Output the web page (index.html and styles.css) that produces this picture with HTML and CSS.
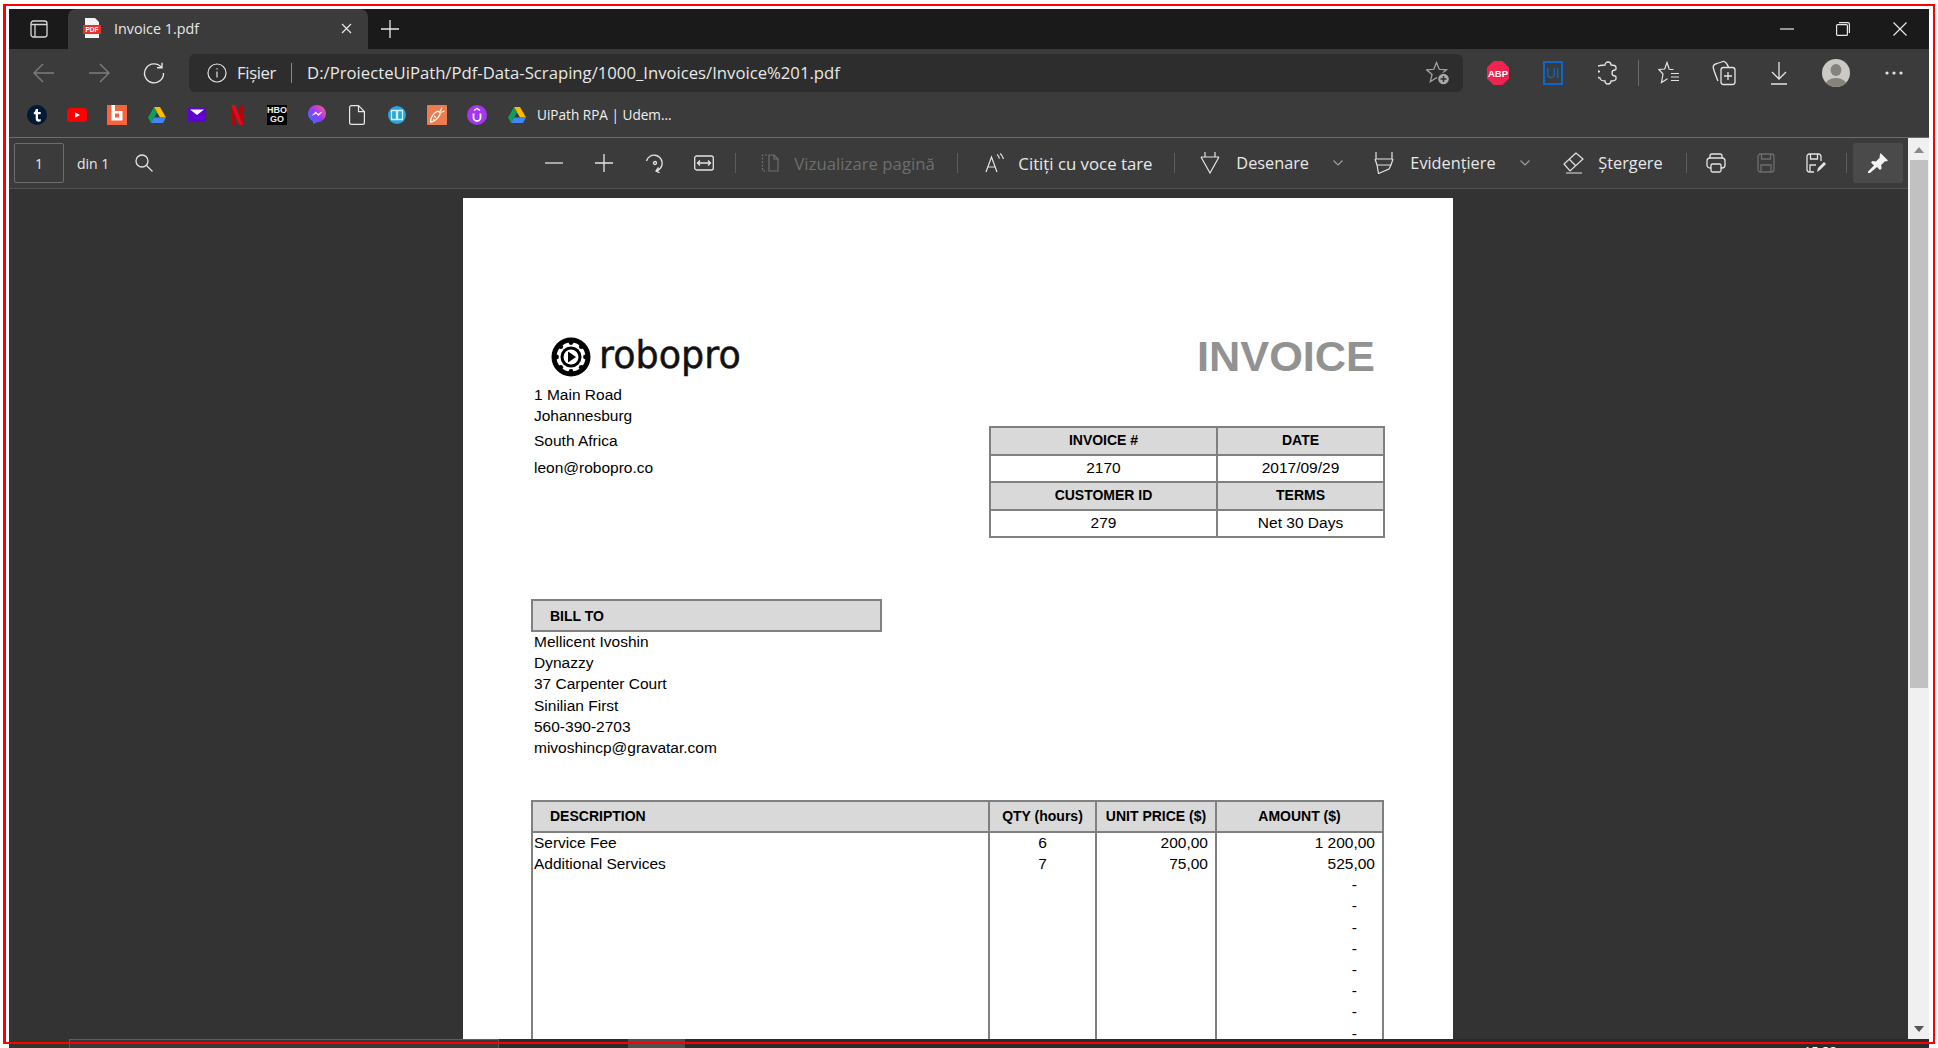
FILE: index.html
```html
<!DOCTYPE html>
<html lang="ro">
<head>
<meta charset="utf-8">
<title>Invoice 1.pdf</title>
<link rel="stylesheet" href="styles.css">
</head>
<body>
<div class="window">
  <header class="tabbar">
    <button class="side-btn">
      <svg width="18" height="18" viewBox="0 0 18 18" fill="none" stroke="#d8d8d8" stroke-width="1.3"><rect x="1" y="1" width="16" height="16" rx="2.5"/><path d="M1 4.5h16M5 4.5V17"/></svg>
    </button>
    <div class="tab">
      <svg width="18" height="20" viewBox="0 0 18 20"><path d="M2 0h10l4 4v16H2z" fill="#f4f4f4"/><rect y="7" width="18" height="9" fill="#e5322d"/><text x="9" y="14.2" class="pdf-mark">PDF</text></svg>
      <span class="tab-title">Invoice 1.pdf</span>
      <svg class="tab-close" width="11" height="11" viewBox="0 0 11 11" stroke="#e8e8e8" stroke-width="1.2"><path d="M1 1l9 9M10 1l-9 9"/></svg>
    </div>
    <svg class="new-tab" width="18" height="18" viewBox="0 0 18 18" stroke="#e8e8e8" stroke-width="1.3"><path d="M9 0v18M0 9h18"/></svg>
    <div class="win-controls">
      <svg width="14" height="14" viewBox="0 0 14 14" stroke="#e8e8e8" stroke-width="1.2"><path d="M0 7h14"/></svg>
      <svg width="14" height="14" viewBox="0 0 14 14" fill="none" stroke="#e8e8e8" stroke-width="1.2"><rect x=".6" y="2.6" width="10.8" height="10.8" rx="1"/><path d="M3 .6h9a1.4 1.4 0 0 1 1.4 1.4v9"/></svg>
      <svg class="win-close" width="14" height="14" viewBox="0 0 14 14" stroke="#e8e8e8" stroke-width="1.2"><path d="M.5.5l13 13M13.5.5l-13 13"/></svg>
    </div>
  </header>

  <nav class="navbar">
    <div class="nav-left">
      <svg width="22" height="20" viewBox="0 0 22 20" fill="none" stroke="#7d7d7d" stroke-width="1.4"><path d="M21 10H1M10 1l-9 9 9 9"/></svg>
      <svg width="22" height="20" viewBox="0 0 22 20" fill="none" stroke="#7d7d7d" stroke-width="1.4"><path d="M1 10h20M12 1l9 9-9 9"/></svg>
      <svg width="22" height="22" viewBox="0 0 22 22" fill="none" stroke="#e4e4e4" stroke-width="1.4"><path d="M18.5 5.5A9.5 9.5 0 1 0 20.5 11"/><path d="M19 .8v5h-5"/></svg>
    </div>
    <div class="address">
      <svg width="20" height="20" viewBox="0 0 20 20" fill="none" stroke="#e4e4e4" stroke-width="1.2"><circle cx="10" cy="10" r="9"/><path d="M10 8.5v6M10 5.2v1.4"/></svg>
      <span class="addr-scheme">Fișier</span>
      <span class="addr-sep"></span>
      <span class="addr-url">D:/ProiecteUiPath/Pdf-Data-Scraping/1000_Invoices/Invoice%201.pdf</span>
      <svg class="addr-star" width="24" height="24" viewBox="0 0 24 24"><path d="M10.500 1.500l2.700 6.800 7.300.5-5.600 4.700 1.800 7.200-6.200-3.900-6.200 3.900 1.800-7.200L.500 8.800l7.300-.5z" fill="none" stroke="#a8a8a8" stroke-width="1.200"/><circle cx="17.500" cy="18" r="6.500" fill="#2d2d2d"/><circle cx="17.500" cy="18" r="5.300" fill="#a8a8a8"/><path d="M17.500 15v6M14.500 18h6" stroke="#2d2d2d" stroke-width="1.400"/></svg>
    </div>
    <div class="nav-right">
      <div class="ext-slot">
        <svg width="22" height="24" viewBox="0 0 22 24"><path d="M6.500 0h9L22 6.500v11L15.500 24h-9L0 17.500v-11z" fill="#ee2350"/><text x="11" y="16" class="abp-mark">ABP</text></svg>
      </div>
      <div class="ext-slot">
        <svg width="20" height="24" viewBox="0 0 20 24"><rect x="1" y="1" width="18" height="22" fill="none" stroke="#0a67d0" stroke-width="2"/><text x="10" y="17" class="ui-mark">Ui</text></svg>
      </div>
      <div class="ext-slot">
        <svg width="20" height="24" viewBox="0 0 20 24" fill="none" stroke="#e4e4e4" stroke-width="1.300"><path d="M7 4a3 3 0 0 1 6 0c2 0 5 .5 5 2.500V8a1 1 0 0 1-1 1 3 3 0 0 0 0 6 1 1 0 0 1 1 1v1.500c0 2-3 2.500-5 2.500a3 3 0 0 1-6 0c-2.500 0-5-1-5-3a3 3 0 0 1 0-6.500 3 3 0 0 1 0-6C2 4.500 5 4 7 4z"/></svg>
      </div>
      <span class="nav-sep"></span>
      <div class="ext-slot">
        <svg width="22" height="24" viewBox="0 0 22 24" fill="none" stroke="#e4e4e4" stroke-width="1.200"><path d="M11.300 8.500L9 1.500 6.700 8 .8 8.500 5 13l-1.500 8.500 6-3.700"/><path d="M11.500 8.500h4M13 12.500h8M13 16h8M13 19.500h8"/></svg>
      </div>
      <div class="ext-slot">
        <svg width="24" height="26" viewBox="0 0 24 26" fill="none" stroke="#e4e4e4" stroke-width="1.300"><rect x="9" y="7.500" width="14" height="17" rx="2.500"/><path d="M16 12v8M12 16h8"/><path d="M6 21C3.500 15 2 11 1.200 7.500 1 5 3 4 5 3.500l6-2c2-.5 4.500 2.500 5.500 6"/></svg>
      </div>
      <div class="ext-slot">
        <svg width="18" height="24" viewBox="0 0 18 24" fill="none" stroke="#e4e4e4" stroke-width="1.300"><path d="M9 1v17M2 11l7 7 7-7M1 23h16"/></svg>
      </div>
      <div class="ext-slot slot-wide">
        <svg width="28" height="28" viewBox="0 0 28 28"><defs><clipPath id="av"><circle cx="14" cy="14" r="14"/></clipPath></defs><circle cx="14" cy="14" r="14" fill="#cbc9c4"/><g clip-path="url(#av)" fill="#86837d"><ellipse cx="14" cy="11" rx="5.500" ry="6"/><ellipse cx="14" cy="27" rx="11" ry="8"/></g></svg>
      </div>
      <div class="ext-slot">
        <svg width="18" height="4" viewBox="0 0 18 4" fill="#e4e4e4"><circle cx="2" cy="2" r="1.600"/><circle cx="9" cy="2" r="1.600"/><circle cx="16" cy="2" r="1.600"/></svg>
      </div>
    </div>
  </nav>

  <div class="bookmarks">
    <span class="bm"><svg width="20" height="20" viewBox="0 0 20 20"><circle cx="10" cy="10" r="10" fill="#001935"/><path d="M8.700 4h2.300v3h2.700v2.300H11v4c0 1.300 1.500 1.300 2.700.7v2.300c-2.500 1-5 .4-5-2.500V9.300H6.800V7.500C8 7 8.500 6 8.700 4z" fill="#fff"/></svg></span>
    <span class="bm"><svg width="20" height="14" viewBox="0 0 20 14"><rect width="20" height="14" rx="3.500" fill="#f00"/><path d="M8 4.200L13 7l-5 2.800z" fill="#fff"/></svg></span>
    <span class="bm"><svg width="20" height="20" viewBox="0 0 20 20"><rect width="20" height="20" fill="#f8623e"/><path d="M4.500 0h3.500v6h7.500v9.500h-11z" fill="#fff"/><rect x="8" y="8.500" width="4" height="4" fill="#f8623e"/></svg></span>
    <span class="bm"><svg width="18" height="16" viewBox="0 0 18 16"><path d="M6 0h6l6 10.500h-6z" fill="#fbbc04"/><path d="M6 0L0 10.500l3 5.500 6-10.500z" fill="#0f9d58"/><path d="M3 16h12l3-5.500H6z" fill="#4285f4"/></svg></span>
    <span class="bm"><svg width="18" height="14" viewBox="0 0 18 14"><rect width="18" height="14" rx="1" fill="#5f01d1"/><path d="M2 1.500h14L9 7z" fill="#fff"/></svg></span>
    <span class="bm"><svg width="12" height="20" viewBox="0 0 12 20"><path d="M0 0h4v20l-4-.5z" fill="#b1060f"/><path d="M8 0h4v20l-4-.5z" fill="#b1060f"/><path d="M0 0h4l8 20-4-.5z" fill="#e50914"/></svg></span>
    <span class="bm"><span class="hbo"><b>HBO</b><b>GO</b></span></span>
    <span class="bm"><svg width="18" height="19" viewBox="0 0 18 19"><defs><linearGradient id="ms" x1="0" y1="1" x2="1" y2="0"><stop offset="0" stop-color="#0a8cff"/><stop offset=".5" stop-color="#a033ff"/><stop offset="1" stop-color="#ff6a6a"/></linearGradient></defs><path d="M9 0a9 8.600 0 0 1 0 17.200L5 19v-2.700A9 8.600 0 0 1 9 0z" fill="url(#ms)"/><path d="M3.500 11L7.500 6.500l2.500 2.300 4.500-2.300-4 4.500-2.500-2.300z" fill="#fff"/></svg></span>
    <span class="bm"><svg width="16" height="20" viewBox="0 0 16 20" fill="none" stroke="#e8e8e8" stroke-width="1.200"><path d="M2.500.6h7L15.400 6.500V17.500a1.900 1.900 0 0 1-1.900 1.900h-11A1.900 1.900 0 0 1 .6 17.500v-15A1.900 1.900 0 0 1 2.500.6zM9.500.6v6h5.900"/></svg></span>
    <span class="bm"><svg width="18" height="18" viewBox="0 0 18 18"><circle cx="9" cy="9" r="9" fill="#27a5dc"/><path d="M3.500 4.500h5v9h-5zM9.500 4.500h5v9h-5z" fill="#27a5dc" stroke="#d5f0fb" stroke-width="1.300"/></svg></span>
    <span class="bm"><svg width="20" height="20" viewBox="0 0 20 20"><rect width="20" height="20" rx="1" fill="#ed7b4d"/><path d="M3.500 17C3 13.500 6.500 8 10 6.500c2-.5 3.500 1 3 3C11.500 13 7 17 3.500 17z" fill="none" stroke="#fff" stroke-width="1.300"/><path d="M13 6.500l2-4M13.500 7.500l4-1.500M7 11l2 1.500M6 14l1.500 1" stroke="#fff" stroke-width="1.200"/></svg></span>
    <span class="bm"><svg width="20" height="20" viewBox="0 0 20 20"><circle cx="10" cy="10" r="10" fill="#a435f0"/><path d="M6.500 8.500v4a3.500 3.500 0 0 0 7 0v-4" fill="none" stroke="#fff" stroke-width="1.800"/><path d="M7 5.500L10 3.500l3 2" fill="none" stroke="#fff" stroke-width="1.500"/></svg></span>
    <span class="bm"><svg width="18" height="16" viewBox="0 0 18 16"><path d="M6 0h6l6 10.500h-6z" fill="#fbbc04"/><path d="M6 0L0 10.500l3 5.500 6-10.500z" fill="#0f9d58"/><path d="M3 16h12l3-5.500H6z" fill="#4285f4"/></svg></span>
    <span class="bm-label">UiPath RPA | Udem...</span>
  </div>

  <div class="viewer">
    <div class="viewer-main">
      <div class="pdf-toolbar">
        <span class="page-box">1</span>
        <span class="page-of">din 1</span>
        <svg class="tb-search" width="18" height="18" viewBox="0 0 18 18" fill="none" stroke="#e4e4e4" stroke-width="1.300"><circle cx="7" cy="7" r="6"/><path d="M11.500 11.500l6 6"/></svg>

        <svg class="tb-minus" width="18" height="18" viewBox="0 0 18 18" stroke="#e4e4e4" stroke-width="1.300"><path d="M0 9h18"/></svg>
        <svg class="tb-ic" width="18" height="18" viewBox="0 0 18 18" stroke="#e4e4e4" stroke-width="1.300"><path d="M9 0v18M0 9h18"/></svg>
        <svg class="tb-ic" width="20" height="20" viewBox="0 0 20 20" fill="none" stroke="#e4e4e4" stroke-width="1.300"><path d="M1.500 8A8 8 0 1 1 11 18"/><path d="M13.500 14.500L11 18l3.500 1.800"/><circle cx="10" cy="10" r="1.500"/></svg>
        <svg class="tb-fit" width="20" height="18" viewBox="0 0 20 18" fill="none" stroke="#e4e4e4" stroke-width="1.300"><rect x=".7" y="2" width="18.600" height="14" rx="2"/><path d="M3.500 9h13M6 6.500L3.500 9 6 11.500M14 6.500L16.500 9 14 11.500"/></svg>
        <span class="tb-sep tb-sep-a"></span>
        <svg class="tb-pv" width="20" height="18" viewBox="0 0 20 18" fill="none" stroke="#6e6e6e" stroke-width="1.200"><path d="M8 1H3.500v16H8" stroke-dasharray="2 1.500"/><path d="M10 1h5l4 4v12h-9zM15 1v4h4"/></svg>
        <span class="tb-label tb-muted">Vizualizare pagină</span>
        <span class="tb-sep tb-sep-b"></span>
        <svg class="tb-read" width="20" height="20" viewBox="0 0 20 20" fill="none" stroke="#e4e4e4" stroke-width="1.200"><path d="M1 19L6.500 4 12 19M3 14h7"/><path d="M12 1.500c1.500 1 2 2.500 2.500 4M15 .5c2 1.300 3 3.500 3.500 5.500"/></svg>
        <span class="tb-label tb-read-l">Citiți cu voce tare</span>
        <span class="tb-sep tb-sep-c"></span>
        <svg class="tb-draw" width="20" height="22" viewBox="0 0 20 22" fill="none" stroke="#e4e4e4" stroke-width="1.200"><path d="M1 5h18M5 0v5M15 0v5M1 5l9 16 9-16"/></svg>
        <span class="tb-label tb-draw-l">Desenare</span>
        <svg class="tb-chev tb-chev-a" width="10" height="6" viewBox="0 0 10 6" fill="none" stroke="#a0a0a0" stroke-width="1.100"><path d="M.5.500L5 5 9.500.500"/></svg>
        <svg class="tb-high" width="20" height="22" viewBox="0 0 20 22" fill="none" stroke="#e4e4e4" stroke-width="1.200"><path d="M2 0v7h16V0M1 7l2 6h14l2-6M3 13l1.500 8.500 10.500-4.500 2-4"/></svg>
        <span class="tb-label tb-high-l">Evidențiere</span>
        <svg class="tb-chev tb-chev-b" width="10" height="6" viewBox="0 0 10 6" fill="none" stroke="#a0a0a0" stroke-width="1.100"><path d="M.5.500L5 5 9.500.500"/></svg>
        <svg class="tb-erase" width="22" height="22" viewBox="0 0 22 22" fill="none" stroke="#e4e4e4" stroke-width="1.200"><path d="M13 1L1 12l6 7 13-12zM6 7l7 7M3 21h16"/></svg>
        <span class="tb-label tb-erase-l">Ștergere</span>
        <span class="tb-sep tb-sep-d"></span>
        <svg class="tb-print" width="20" height="20" viewBox="0 0 20 20" fill="none" stroke="#e4e4e4" stroke-width="1.300"><path d="M4 5V3a2 2 0 0 1 2-2h8a2 2 0 0 1 2 2v2"/><rect x="1" y="5" width="18" height="10" rx="3"/><rect x="5" y="11" width="10" height="8" rx="1.500" fill="#3b3b3b"/></svg>
        <svg class="tb-save" width="18" height="20" viewBox="0 0 18 20" fill="none" stroke="#6e6e6e" stroke-width="1.300"><rect x="1" y="1" width="16" height="18" rx="2.500"/><path d="M4.500 1v5h9V1M4 19v-7h10v7"/></svg>
        <svg class="tb-save2" width="20" height="20" viewBox="0 0 20 20" fill="none" stroke="#e4e4e4" stroke-width="1.300"><path d="M8 19H3.500A2.500 2.500 0 0 1 1 16.500v-13A2.500 2.500 0 0 1 3.500 1h9A2.500 2.500 0 0 1 15 3.500V8"/><path d="M4.500 1v5h7V1M4 19v-7h6"/><path d="M11 19l1-4 6-6 2 2-6 6z" fill="#e4e4e4" stroke="none"/></svg>
        <span class="tb-sep tb-sep-e"></span>
        <span class="pin-box"><svg width="20" height="20" viewBox="0 0 20 20" fill="#f2f2f2"><path d="M12.500 0L20 7.500l-2 1-1-.3-3.800 3.800.4 3.500-1.600 1.500-3-3L2 20H0v-1.500l6-6-3-3L4.500 8l3.500.4L11.800 4.500l-.3-1z"/></svg></span>
      </div>

      <main class="pdf-area">
        <article class="page">
          <div class="top-row">
            <div class="logo">
              <svg width="40" height="40" viewBox="0 0 40 40">
                <circle cx="20" cy="20" r="19.500" fill="#000"/>
                <circle cx="20" cy="20" r="14.500" fill="#fff"/>
                <g fill="#000">
                  <circle cx="20" cy="5.500" r="2.400"/><circle cx="20" cy="34.500" r="2.400"/><circle cx="5.500" cy="20" r="2.400"/><circle cx="34.500" cy="20" r="2.400"/>
                  <circle cx="9.700" cy="9.700" r="2.400"/><circle cx="30.300" cy="9.700" r="2.400"/><circle cx="9.700" cy="30.300" r="2.400"/><circle cx="30.300" cy="30.300" r="2.400"/>
                  <circle cx="20" cy="20" r="10.500"/>
                </g>
                <circle cx="20" cy="20" r="7.500" fill="#fff"/>
                <path d="M17 14.500l8 5.500-8 5.500z" fill="#000"/>
              </svg>
              <span class="logo-word">robopro</span>
            </div>
            <h1 class="inv-title">INVOICE</h1>
          </div>
          <div class="head-row">
            <div class="sender">
              <p class="ln-a">1 Main Road</p>
              <p class="ln-b">Johannesburg</p>
              <p class="ln-c">South Africa</p>
              <p class="ln-d">leon@robopro.co</p>
            </div>
            <table class="meta">
              <colgroup><col class="meta-c1"><col class="meta-c2"></colgroup>
              <tr class="hd"><td>INVOICE #</td><td>DATE</td></tr>
              <tr><td>2170</td><td>2017/09/29</td></tr>
              <tr class="hd"><td>CUSTOMER ID</td><td>TERMS</td></tr>
              <tr><td>279</td><td>Net 30 Days</td></tr>
            </table>
          </div>
          <div class="bill-head">BILL TO</div>
          <div class="bill-lines">
            <p>Mellicent Ivoshin</p>
            <p>Dynazzy</p>
            <p>37 Carpenter Court</p>
            <p>Sinilian First</p>
            <p>560-390-2703</p>
            <p>mivoshincp@gravatar.com</p>
          </div>
          <table class="items">
            <colgroup><col class="it-c1"><col class="it-c2"><col class="it-c3"><col class="it-c4"></colgroup>
            <thead>
              <tr><th class="th-desc">DESCRIPTION</th><th>QTY (hours)</th><th>UNIT PRICE ($)</th><th>AMOUNT ($)</th></tr>
            </thead>
            <tbody>
              <tr><td>Service Fee</td><td class="c">6</td><td class="r">200,00</td><td class="r">1 200,00</td></tr>
              <tr><td>Additional Services</td><td class="c">7</td><td class="r">75,00</td><td class="r">525,00</td></tr>
              <tr><td></td><td></td><td></td><td class="dash">-</td></tr>
              <tr><td></td><td></td><td></td><td class="dash">-</td></tr>
              <tr><td></td><td></td><td></td><td class="dash">-</td></tr>
              <tr><td></td><td></td><td></td><td class="dash">-</td></tr>
              <tr><td></td><td></td><td></td><td class="dash">-</td></tr>
              <tr><td></td><td></td><td></td><td class="dash">-</td></tr>
              <tr><td></td><td></td><td></td><td class="dash">-</td></tr>
              <tr><td></td><td></td><td></td><td class="dash">-</td></tr>
              <tr><td></td><td></td><td></td><td class="dash">-</td></tr>
            </tbody>
          </table>
        </article>
      </main>
    </div>
    <aside class="scrollbar">
      <span class="arrow-up"></span>
      <span class="thumb"></span>
      <span class="arrow-down"></span>
    </aside>
  </div>
</div>
<footer class="taskbar">
  <span class="tk-a"></span>
  <span class="tk-b"></span>
  <span class="tk-c"></span>
  <span class="tk-clock">15:32</span>
</footer>
<div class="red-frame"></div>
</body>
</html>
```
FILE: styles.css
```css
* { box-sizing: border-box; }
html, body { margin: 0; height: 1048px; overflow: hidden; background: #fff; }
body { position: relative; padding: 9px 0 0 9px; font-family: "Open Sans", "Liberation Sans", sans-serif; color: #e8e8e8; }
p, h1 { margin: 0; }
svg { display: block; flex: none; }

.window { width: 1920px; height: 1030px; display: flex; flex-direction: column; background: #3b3b3b; overflow: hidden; }

/* tab strip */
.tabbar { height: 40px; background: #1a1a1a; display: flex; align-items: center; flex: none; }
.side-btn { width: 59px; height: 40px; padding: 0 0 0 21px; border: 0; background: none; display: flex; align-items: center; }
.tab { width: 300px; height: 40px; background: #3b3b3b; border-radius: 8px 8px 0 0; display: flex; align-items: center; padding: 0 16px 2px 15px; }
.pdf-mark { font: bold 6.500px "Liberation Sans", sans-serif; fill: #fff; text-anchor: middle; }
.tab-title { margin-left: 13px; font-size: 14.300px; flex: 1; white-space: nowrap; }
.new-tab { margin-left: 13px; }
.win-controls { margin-left: auto; display: flex; gap: 42px; padding-right: 22px; }
.win-close { margin-left: 1px; }

/* nav row */
.navbar { height: 48px; flex: none; display: flex; align-items: center; }
.nav-left { width: 180px; display: flex; align-items: center; gap: 33px; padding-left: 24px; }
.address { width: 1274px; height: 38px; background: #2d2d2d; border-radius: 6px; display: flex; align-items: center; padding: 0 13px 0 18px; font-size: 16.700px; }
.addr-scheme { margin-left: 10px; letter-spacing: -.35px; padding-bottom: 2px; }
.addr-sep { width: 1px; height: 20px; background: #8a8a8a; margin: 0 15px; }
.addr-url { flex: 1; white-space: nowrap; padding-bottom: 2px; }
.nav-right { display: flex; align-items: center; padding-left: 7px; }
.ext-slot { width: 55px; height: 38px; display: flex; align-items: center; justify-content: center; }
.slot-wide { width: 60px; }
.abp-mark { font: bold 9.500px "Liberation Sans", sans-serif; fill: #fff; text-anchor: middle; }
.ui-mark { font: 14px "Open Sans", sans-serif; fill: #0a67d0; text-anchor: middle; }
.nav-sep { width: 1px; height: 26px; background: #6a6a6a; margin: 0 2px 0 3px; }

/* bookmarks */
.bookmarks { height: 41px; flex: none; display: flex; align-items: center; padding: 0 0 5px 8px; border-bottom: 1px solid #6c6c6c; }
.bm { width: 40px; display: flex; justify-content: center; align-items: center; }
.bm-label { font-size: 13.600px; white-space: nowrap; color: #f0f0f0; }
.hbo { width: 20px; height: 20px; background: #000; display: flex; flex-direction: column; align-items: center; justify-content: center; font: 9px/9px "Liberation Sans", sans-serif; color: #eee; }
.hbo b { display: block; }

/* viewer */
.viewer { flex: 1; display: flex; min-height: 0; }
.viewer-main { width: 1899px; display: flex; flex-direction: column; }
.pdf-toolbar { height: 51px; flex: none; border-bottom: 1px solid #525252; display: flex; align-items: center; padding-left: 5px; }
.page-box { width: 50px; height: 40px; border: 1px solid #6e6e6e; border-radius: 2px; display: flex; align-items: center; justify-content: center; font-size: 14px; }
.page-of { margin-left: 13px; font-size: 14px; }
.tb-search { margin-left: 26px; }
.tb-minus { margin-left: 392px; }
.tb-ic { margin-left: 32px; }
.tb-fit { margin-left: 29px; }
.tb-label { flex: none; white-space: nowrap; font-size: 16.300px; }
.tb-muted { width: 140px; color: #6e6e6e; margin-left: 15px; font-size: 16.800px; }
.tb-sep { width: 1px; height: 20px; background: #5c5c5c; flex: none; }
.tb-sep-a { margin-left: 21px; }
.tb-pv { margin-left: 23px; }
.tb-sep-b { margin-left: 23px; }
.tb-read { margin-left: 27px; }
.tb-read-l { width: 133px; margin-left: 13px; font-size: 16.800px; }
.tb-sep-c { margin-left: 23px; }
.tb-draw { margin-left: 25px; }
.tb-draw-l { width: 71px; margin-left: 16px; }
.tb-chev-a { margin-left: 26px; }
.tb-high { margin-left: 31px; }
.tb-high-l { width: 85px; margin-left: 16px; }
.tb-chev-b { margin-left: 25px; }
.tb-erase { margin-left: 33px; }
.tb-erase-l { width: 64px; margin-left: 13px; }
.tb-sep-d { margin-left: 24px; }
.tb-print { margin-left: 19px; }
.tb-save { margin-left: 31px; }
.tb-save2 { margin-left: 31px; }
.tb-sep-e { margin-left: 20px; }
.pin-box { width: 50px; height: 40px; margin-left: 6px; border-radius: 3px; background: #4a4a4a; display: flex; align-items: center; justify-content: center; }

.pdf-area { flex: 1; background: #333; padding: 9px 0 0 454px; overflow: hidden; min-height: 0; }
.page { width: 990px; height: 900px; background: #fff; padding: 139px 69px 0 69px; font: 15.500px "Liberation Sans", Arial, sans-serif; color: #000; }

.top-row { display: flex; justify-content: space-between; align-items: center; height: 40px; }
.logo { display: flex; align-items: center; gap: 8px; margin-left: 19px; }
.logo-word { font: 400 36.500px/40px "DejaVu Sans", sans-serif; color: #111; -webkit-text-stroke: .5px #111; padding-bottom: 2px; }
.inv-title { font-size: 43.300px; line-height: 40px; font-weight: 700; color: #929292; margin-right: 9px; padding-bottom: 2px; }

.head-row { display: flex; justify-content: space-between; height: 222px; padding-left: 2px; padding-top: 7px; }
.sender p { white-space: nowrap; line-height: 21px; }
.ln-c { margin-top: 4px; }
.ln-d { margin-top: 6px; }

.meta { border-collapse: collapse; table-layout: fixed; width: 394px; height: 110px; margin-top: 42px; margin-right: -1px; align-self: flex-start; text-align: center; }
.meta-c1 { width: 227px; }
.meta-c2 { width: 167px; }
.meta td { border: 2px solid #808080; padding: 0 0 1px; height: 27.500px; }
.meta .hd td { background: #d9d9d9; font-weight: 700; font-size: 14px; }

.bill-head { width: 351px; height: 33px; margin-left: -1px; background: #d9d9d9; border: 2px solid #808080; display: flex; align-items: center; padding-left: 17px; font-weight: 700; font-size: 14px; }
.bill-lines { height: 169px; margin-top: -1px; padding-left: 2px; }
.bill-lines p { line-height: 21.200px; }

.items { border-collapse: collapse; table-layout: fixed; width: 851px; margin-left: -1px; }
.it-c1 { width: 457px; }
.it-c2 { width: 107px; }
.it-c3 { width: 120px; }
.it-c4 { width: 167px; }
.items th { height: 31px; background: #d9d9d9; border: 2px solid #808080; padding: 0 0 1px; font-size: 14px; font-weight: 700; text-align: center; white-space: nowrap; }
.items .th-desc { text-align: left; padding-left: 17px; }
.items td { height: 21.200px; padding: 0 1px 1px; border-left: 2px solid #808080; border-right: 2px solid #808080; line-height: 20px; }
.c { text-align: center; }
.r { text-align: right; }
.items td.r { padding-right: 7px; }
.items td.dash { text-align: right; padding-right: 25px; }

/* scrollbar */
.scrollbar { width: 21px; background: #f0f0f0; display: flex; flex-direction: column; align-items: center; padding-top: 9px; }
.arrow-up { width: 0; height: 0; border: 5px solid transparent; border-top: 0; border-bottom: 6px solid #8a8a8a; }
.thumb { width: 18px; height: 528px; margin-top: 7px; background: #c1c1c1; }
.arrow-down { width: 0; height: 0; margin-top: auto; margin-bottom: 7px; border: 5px solid transparent; border-bottom: 0; border-top: 6px solid #555; }

/* sliver of the desktop task bar under the window */
.taskbar { width: 1920px; height: 9px; background: #2a2b2c; display: flex; align-items: stretch; color: #fff; overflow: hidden; }
.tk-a { width: 60px; background: #35342a; }
.tk-b { width: 430px; background: #393939; border: 1px solid #5e5e5e; border-bottom: 0; }
.tk-c { width: 57px; margin-left: 129px; background: #505050; }
.tk-clock { margin-left: auto; margin-right: 92px; font: 13px/14px "Open Sans", sans-serif; padding-top: 5px; }

/* red annotation rectangle over the whole capture */
.red-frame { position: absolute; left: 3px; top: 4px; width: 1932px; height: 1040px; border: 2px solid #f00; border-left-width: 3px; pointer-events: none; }
```
